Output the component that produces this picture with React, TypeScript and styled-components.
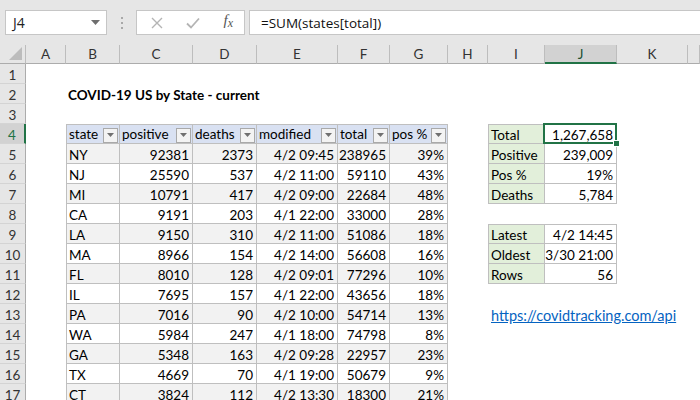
import styled, { createGlobalStyle, css } from 'styled-components';

const GlobalStyle = createGlobalStyle`
  html, body {
    margin: 0;
    padding: 0;
    background: #ffffff;
  }
  body {
    width: 700px;
    height: 400px;
    overflow: hidden;
    font-family: Lato, 'Liberation Sans', sans-serif;
  }
`;

const COL_WIDTHS = [40, 54, 73, 64, 81, 52, 58, 40, 57, 72, 71];
const LETTERS = ['A', 'B', 'C', 'D', 'E', 'F', 'G', 'H', 'I', 'J', 'K'];
const SELECTED_COL = 9;
const SELECTED_ROW = 4;

const HEADERS = ['state', 'positive', 'deaths', 'modified', 'total', 'pos %'];

type StateRow = [string, number, number, string, number, string];

const STATES: StateRow[] = [
  ['NY', 92381, 2373, '4/2 09:45', 238965, '39%'],
  ['NJ', 25590, 537, '4/2 11:00', 59110, '43%'],
  ['MI', 10791, 417, '4/2 09:00', 22684, '48%'],
  ['CA', 9191, 203, '4/1 22:00', 33000, '28%'],
  ['LA', 9150, 310, '4/2 11:00', 51086, '18%'],
  ['MA', 8966, 154, '4/2 14:00', 56608, '16%'],
  ['FL', 8010, 128, '4/2 09:01', 77296, '10%'],
  ['IL', 7695, 157, '4/1 22:00', 43656, '18%'],
  ['PA', 7016, 90, '4/2 10:00', 54714, '13%'],
  ['WA', 5984, 247, '4/1 18:00', 74798, '8%'],
  ['GA', 5348, 163, '4/2 09:28', 22957, '23%'],
  ['TX', 4669, 70, '4/1 19:00', 50679, '9%'],
  ['CT', 3824, 112, '4/2 13:30', 18300, '21%'],
];

const SUMMARY: Record<number, [string, string]> = {
  4: ['Total', '1,267,658'],
  5: ['Positive', '239,009'],
  6: ['Pos %', '19%'],
  7: ['Deaths', '5,784'],
  9: ['Latest', '4/2 14:45'],
  10: ['Oldest', '3/30 21:00'],
  11: ['Rows', '56'],
};

type Kind = 'blank' | 'title' | 'head' | 'data' | 'label' | 'value' | 'link';

export default function App() {
  const rows = Array.from({ length: 17 }, (_, i) => i + 1);

  const renderCell = (row: number, col: number) => {
    const key = `${row}-${col}`;

    if (col >= 1 && col <= 6) {
      if (row === 2 && col === 1) {
        return (
          <Cell key={key} $kind="title">
            COVID-19 US by State - current
          </Cell>
        );
      }
      if (row === 4) {
        return (
          <Cell key={key} $kind="head" $edgeLeft={col === 1} $edgeTop>
            <span>{HEADERS[col - 1]}</span>
            <FilterButton>
              <svg width="7" height="4" viewBox="0 0 7 4">
                <path d="M0 0 L7 0 L3.5 4 Z" fill="#707070" />
              </svg>
            </FilterButton>
          </Cell>
        );
      }
      if (row >= 5) {
        const item = STATES[row - 5];
        const value = item[col - 1];
        return (
          <Cell
            key={key}
            $kind="data"
            $band={row % 2 === 1}
            $edgeLeft={col === 1}
            $right={col > 1}
          >
            {value}
          </Cell>
        );
      }
    }

    if (col === 8 || col === 9) {
      if (row === 13 && col === 8) {
        return (
          <Cell key={key} $kind="link">
            <Link>https://covidtracking.com/api</Link>
          </Cell>
        );
      }
      const entry = SUMMARY[row];
      if (entry) {
        const isLabel = col === 8;
        return (
          <Cell
            key={key}
            $kind={isLabel ? 'label' : 'value'}
            $edgeLeft={isLabel}
            $edgeTop={row === 4 || row === 9}
            $right={!isLabel}
            $selected={row === SELECTED_ROW && col === SELECTED_COL}
          >
            {isLabel ? entry[0] : entry[1]}
          </Cell>
        );
      }
    }

    return <Cell key={key} $kind="blank" />;
  };

  return (
    <>
      <GlobalStyle />
      <Window>
        <Toolbar>
          <NameBox>
            <span>J4</span>
            <svg width="9" height="5" viewBox="0 0 9 5">
              <path d="M0 0 L9 0 L4.5 5 Z" fill="#6e6e6e" />
            </svg>
          </NameBox>
          <Grip>
            <Dot />
            <Dot />
            <Dot />
          </Grip>
          <FuncBox>
            <svg width="12" height="12" viewBox="0 0 12 12">
              <path d="M1 1 L11 11 M11 1 L1 11" stroke="#b4b4b4" strokeWidth="1.4" />
            </svg>
            <svg width="14" height="12" viewBox="0 0 14 12">
              <path d="M1 6.5 L5 10.5 L13 1.5" stroke="#b4b4b4" strokeWidth="1.8" fill="none" />
            </svg>
            <Fx>
              f<sub>x</sub>
            </Fx>
          </FuncBox>
          <FormulaInput>=SUM(states[total])</FormulaInput>
        </Toolbar>
        <Sheet>
          <Corner>
            <svg width="13" height="13" viewBox="0 0 13 13">
              <path d="M13 0 L13 13 L0 13 Z" fill="#bcbcbc" />
            </svg>
          </Corner>
          {LETTERS.map((letter, i) => (
            <ColHead key={letter} $active={i === SELECTED_COL}>
              {letter}
            </ColHead>
          ))}
          <ColHead />
          {rows.map(row => [
            <RowHead key={`h${row}`} $active={row === SELECTED_ROW}>
              {row}
            </RowHead>,
            ...Array.from({ length: 12 }, (_, c) => renderCell(row, c)),
          ])}
        </Sheet>
      </Window>
    </>
  );
}

const Window = styled.div`
  width: 700px;
  height: 400px;
  overflow: hidden;
  background: #ffffff;
`;

const Toolbar = styled.div`
  display: flex;
  align-items: center;
  height: 45px;
  padding-left: 5px;
  background: #e6e6e6;
  font-family: 'Open Sans', 'Noto Sans', sans-serif;
`;

const Box = styled.div`
  box-sizing: border-box;
  height: 25px;
  background: #ffffff;
  border: 1px solid #c6c6c6;
  display: flex;
  align-items: center;
`;

const NameBox = styled(Box)`
  width: 102px;
  justify-content: space-between;
  padding: 0 6px 0 7px;
  font-size: 14px;
  color: #222;
`;

const Grip = styled.div`
  display: flex;
  flex-direction: column;
  gap: 3px;
  margin: 0 13px 0 14px;
`;

const Dot = styled.div`
  width: 2px;
  height: 2px;
  background: #a8a8a8;
`;

const FuncBox = styled(Box)`
  width: 109px;
  justify-content: space-between;
  padding: 0 11px 0 14px;
`;

const Fx = styled.span`
  font-family: 'Liberation Serif', serif;
  font-style: italic;
  font-size: 15px;
  color: #555;
  margin-top: -3px;

  sub {
    font-size: 12px;
    vertical-align: -2px;
  }
`;

const FormulaInput = styled(Box)`
  flex: 1;
  margin-left: 4px;
  margin-right: -10px;
  padding-left: 11px;
  font-size: 13.5px;
  color: #111;
`;

const Sheet = styled.div`
  display: grid;
  grid-template-columns: 26px ${COL_WIDTHS.map(w => `${w}px`).join(' ')} 1fr;
  grid-template-rows: 19px;
  grid-auto-rows: 20px;
  font-size: 13.5px;
`;

const Corner = styled.div`
  box-sizing: border-box;
  background: #e6e6e6;
  border-right: 1px solid #bdbdbd;
  border-bottom: 1px solid #acacac;
  display: flex;
  align-items: flex-end;
  justify-content: flex-end;
  padding: 0 3px 3px 0;
`;

const ColHead = styled.div<{ $active?: boolean }>`
  box-sizing: border-box;
  display: flex;
  align-items: center;
  justify-content: center;
  background: ${p => (p.$active ? '#d2d2d2' : '#e6e6e6')};
  border-right: 1px solid #bdbdbd;
  border-bottom: ${p => (p.$active ? '2px solid #217346' : '1px solid #acacac')};
  color: ${p => (p.$active ? '#1c4f33' : '#333')};
  font-size: 13.5px;
`;

const RowHead = styled.div<{ $active?: boolean }>`
  box-sizing: border-box;
  display: flex;
  align-items: center;
  justify-content: center;
  padding-top: 2px;
  background: ${p => (p.$active ? '#d2d2d2' : '#e6e6e6')};
  border-right: ${p => (p.$active ? '2px solid #217346' : '1px solid #acacac')};
  border-bottom: 1px solid #d4d4d4;
  color: ${p => (p.$active ? '#217346' : '#333')};
  font-size: 13.5px;
`;

const Cell = styled.div<{
  $kind: Kind;
  $right?: boolean;
  $band?: boolean;
  $edgeLeft?: boolean;
  $edgeTop?: boolean;
  $selected?: boolean;
}>`
  box-sizing: border-box;
  position: relative;
  min-width: 0;
  display: flex;
  align-items: center;
  justify-content: ${p => (p.$right ? 'flex-end' : 'flex-start')};
  padding: 2px 3px 0 2px;
  white-space: nowrap;
  color: #000;

  ${p =>
    (p.$kind === 'head' || p.$kind === 'data' || p.$kind === 'label' || p.$kind === 'value') &&
    css`
      border-right: 1px solid #bfbfbf;
      border-bottom: 1px solid #bfbfbf;
    `}
  ${p => p.$edgeLeft && 'border-left: 1px solid #bfbfbf;'}
  ${p => p.$edgeTop && 'border-top: 1px solid #bfbfbf;'}

  ${p => p.$kind === 'title' && 'font-weight: 700; overflow: visible;'}
  ${p => p.$kind === 'link' && 'overflow: visible; padding-left: 3px; font-size: 14.5px;'}
  ${p =>
    p.$kind === 'head' &&
    css`
      background: #d9e1f2;
      justify-content: space-between;
      padding: 0 1px 0 2px;
    `}
  ${p => p.$kind === 'data' && `background: ${p.$band ? '#f2f2f2' : '#ffffff'};`}
  ${p => p.$kind === 'label' && 'background: #e2efda;'}

  ${p =>
    p.$selected &&
    css`
      &::after {
        content: '';
        position: absolute;
        top: -2px;
        left: -2px;
        right: -1px;
        bottom: -1px;
        border: 2px solid #217346;
        pointer-events: none;
      }
      &::before {
        content: '';
        position: absolute;
        right: -4px;
        bottom: -4px;
        width: 5px;
        height: 5px;
        background: #217346;
        border: 1px solid #ffffff;
        z-index: 2;
      }
    `}
`;

const FilterButton = styled.div`
  box-sizing: border-box;
  width: 15px;
  height: 15px;
  margin-top: 2px;
  display: flex;
  align-items: center;
  justify-content: center;
  background: #f3f3f3;
  border: 1px solid #a9a9a9;
  flex-shrink: 0;
`;

const Link = styled.span`
  color: #0563c1;
  text-decoration: underline;
`;
